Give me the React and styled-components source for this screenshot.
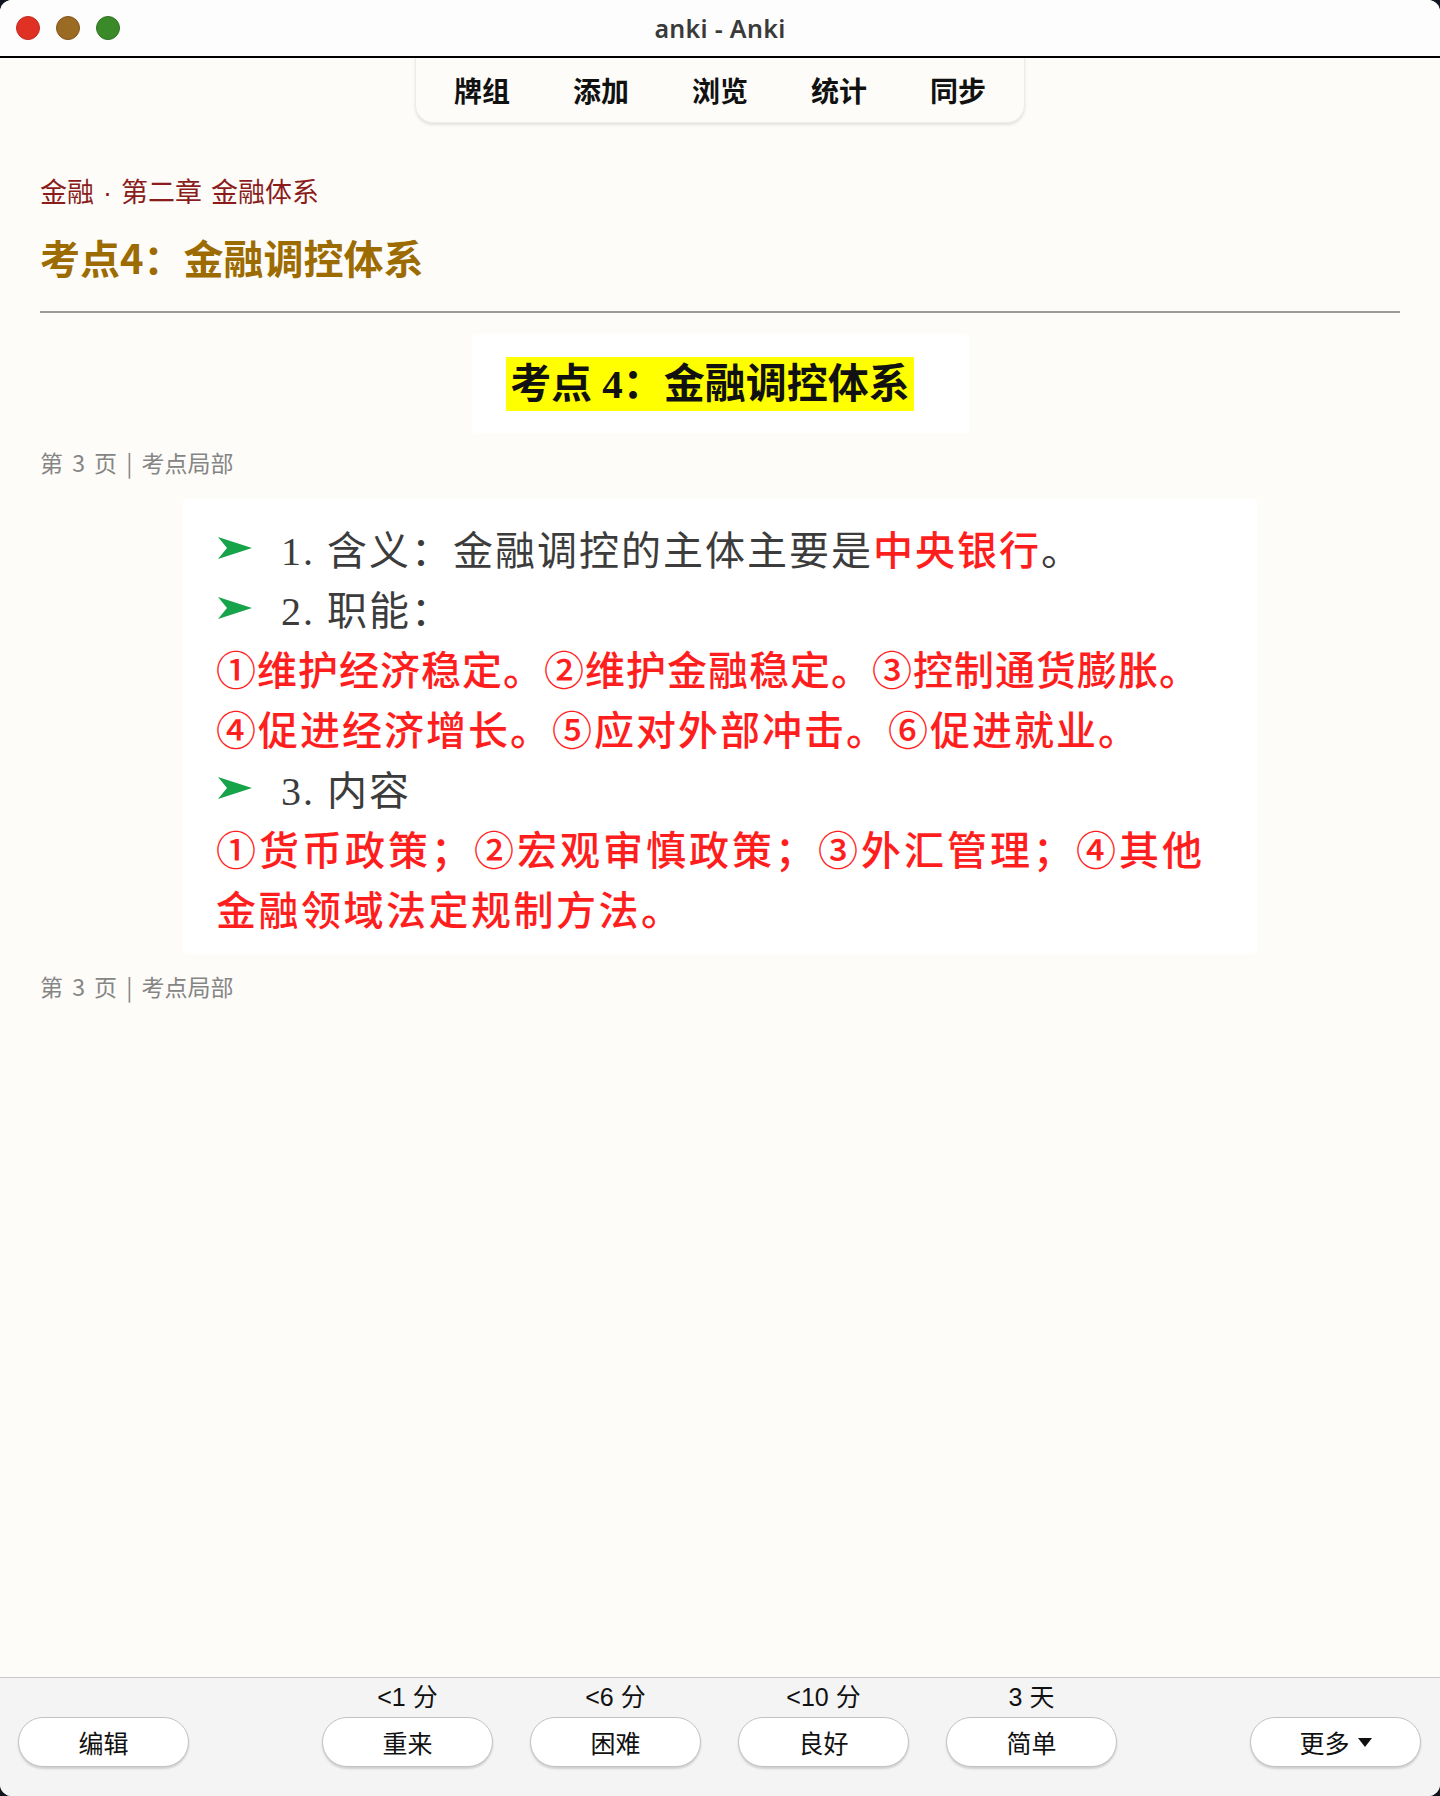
import React from "react";
import styled, { createGlobalStyle } from "styled-components";

const GlobalStyle = createGlobalStyle`
  html, body {
    margin: 0;
    padding: 0;
    background: #10151f;
  }
  body {
    font-family: "Noto Sans", "Noto Sans CJK SC", sans-serif;
  }
  * {
    box-sizing: border-box;
  }
`;

const CJK = `"Noto Sans CJK SC", "Noto Sans", sans-serif`;

const Window = styled.div`
  width: 1440px;
  height: 1796px;
  display: flex;
  flex-direction: column;
  border-radius: 12px;
  overflow: hidden;
  background: #fdfcf8;
`;

const TitleBar = styled.header`
  height: 58px;
  flex-shrink: 0;
  display: grid;
  grid-template-columns: 1fr auto 1fr;
  align-items: center;
  background: #fdfdfd;
  border-bottom: 2px solid #000;
  padding: 0 16px;
`;

const Lights = styled.div`
  display: flex;
  gap: 16px;
`;

const Light = styled.span`
  width: 24px;
  height: 24px;
  border-radius: 50%;
  background: ${(p) => p.color};
  border: 1px solid ${(p) => p.edge};
`;

const WindowTitle = styled.div`
  font-family: "Noto Sans", sans-serif;
  font-size: 25px;
  font-weight: 600;
  color: #3a3a3a;
  letter-spacing: 0.3px;
`;

const Main = styled.main`
  flex: 1;
  display: flex;
  flex-direction: column;
  padding: 0 40px;
  overflow: hidden;
`;

const NavTab = styled.nav`
  align-self: center;
  display: flex;
  align-items: center;
  gap: 63px;
  height: 65px;
  padding: 0 38px;
  background: #fdfcf8;
  border: 1px solid #ececec;
  border-top: none;
  border-radius: 0 0 18px 18px;
  box-shadow: 0 2px 3px rgba(0, 0, 0, 0.1);
`;

const NavItem = styled.a`
  font-family: ${CJK};
  font-size: 28px;
  font-weight: 700;
  color: #111;
  text-decoration: none;
  line-height: 1;
`;

const Breadcrumb = styled.div`
  margin-top: 50px;
  font-family: ${CJK};
  font-size: 27px;
  line-height: 35px;
  color: #8a1c1c;
  word-spacing: 3px;
`;

const Dot = styled.span`
  font-family: "Liberation Sans", sans-serif;
  margin: 0 9px;
`;

const Heading = styled.h1`
  margin: 22px 0 0;
  font-family: ${CJK};
  font-size: 40px;
  line-height: 48px;
  font-weight: 700;
  color: #9c6b02;
`;

const Rule = styled.hr`
  margin: 30px 0 0;
  border: none;
  border-top: 2px solid #9a9a9a;
  height: 0;
`;

const PictureBox = styled.div`
  align-self: center;
  width: ${(p) => p.w}px;
  margin-top: ${(p) => p.top}px;
  background: #fff;
  border-radius: 4px;
`;

const TitlePicture = styled(PictureBox)`
  height: 99px;
  display: flex;
  align-items: center;
  justify-content: center;
  padding-right: 20px;
`;

const Highlight = styled.span`
  background: #ffff00;
  font-family: "Liberation Serif", ${CJK};
  font-size: 41px;
  font-weight: 700;
  line-height: 54px;
  padding: 0 4px;
  color: #111;
`;

const Caption = styled.div`
  margin-top: ${(p) => p.top}px;
  font-family: ${CJK};
  font-size: 23px;
  line-height: 30px;
  word-spacing: 4px;
  color: #858585;
`;

const NotesPicture = styled(PictureBox)`
  height: 455px;
  padding: 19px 20px 0 33px;
`;

const Line = styled.div`
  display: flex;
  align-items: center;
  height: 60px;
  white-space: nowrap;
  font-family: ${(p) => (p.red ? CJK : `"Liberation Serif", ${CJK}`)};
  font-size: 40px;
  font-weight: ${(p) => (p.red ? 500 : 400)};
  letter-spacing: ${(p) => p.spacing ?? 2}px;
  color: ${(p) => (p.red ? "#ff1e1e" : "#3c3c3c")};
`;

const Arrow = styled.svg`
  width: 34px;
  height: 22px;
  margin: 0 29px 0 2px;
  flex-shrink: 0;
`;

const Red = styled.span`
  color: #ff1e1e;
  font-family: ${CJK};
  font-weight: 500;
`;

const BottomBar = styled.footer`
  flex-shrink: 0;
  height: 119px;
  display: grid;
  grid-template-columns: 1fr auto 1fr;
  align-items: end;
  padding: 0 19px 29px 18px;
  background: #f4f4f4;
  border-top: 1px solid #c8c8c8;
`;

const Answers = styled.div`
  display: flex;
  gap: 37px;
`;

const AnswerCol = styled.div`
  display: flex;
  flex-direction: column;
  align-items: center;
  gap: 6px;
`;

const Due = styled.div`
  font-family: "Liberation Sans", ${CJK};
  font-size: 25px;
  line-height: 28px;
  color: #111;
`;

const Button = styled.button`
  width: 171px;
  height: 50px;
  justify-self: ${(p) => p.side || "center"};
  display: flex;
  align-items: center;
  justify-content: center;
  gap: 8px;
  border-radius: 25px;
  border: 1px solid #c2c2c2;
  background: #fff;
  box-shadow: 0 2px 2px rgba(0, 0, 0, 0.15);
  font-family: ${CJK};
  font-size: 25px;
  color: #111;
  padding: 0;
`;

function GreenArrow() {
  return (
    <Arrow viewBox="0 0 34 22">
      <path d="M0 0 L34 11 L0 22 L9 11 Z" fill="#16a34a" />
    </Arrow>
  );
}

const answers = [
  { due: "<1 分", label: "重来" },
  { due: "<6 分", label: "困难" },
  { due: "<10 分", label: "良好" },
  { due: "3 天", label: "简单" },
];

export default function App() {
  return (
    <>
      <GlobalStyle />
      <Window>
        <TitleBar>
          <Lights>
            <Light color="#df3225" edge="#c22a1e" />
            <Light color="#9b6a23" edge="#7f561a" />
            <Light color="#3b8a2a" edge="#2f7222" />
          </Lights>
          <WindowTitle>anki - Anki</WindowTitle>
          <div />
        </TitleBar>

        <Main>
          <NavTab>
            <NavItem>牌组</NavItem>
            <NavItem>添加</NavItem>
            <NavItem>浏览</NavItem>
            <NavItem>统计</NavItem>
            <NavItem>同步</NavItem>
          </NavTab>

          <Breadcrumb>
            金融<Dot>·</Dot>第二章 金融体系
          </Breadcrumb>
          <Heading>考点4：金融调控体系</Heading>
          <Rule />

          <TitlePicture w={497} top={21}>
            <Highlight>考点 4：金融调控体系</Highlight>
          </TitlePicture>
          <Caption top={14}>第 3 页 | 考点局部</Caption>

          <NotesPicture w={1074} top={22}>
            <Line>
              <GreenArrow />
              1. 含义：金融调控的主体主要是<Red>中央银行</Red>。
            </Line>
            <Line>
              <GreenArrow />
              2. 职能：
            </Line>
            <Line red spacing={1}>
              ①维护经济稳定。②维护金融稳定。③控制通货膨胀。
            </Line>
            <Line red spacing={2}>
              ④促进经济增长。⑤应对外部冲击。⑥促进就业。
            </Line>
            <Line>
              <GreenArrow />
              3. 内容
            </Line>
            <Line red spacing={3}>
              ①货币政策；②宏观审慎政策；③外汇管理；④其他
            </Line>
            <Line red spacing={2.5}>
              金融领域法定规制方法。
            </Line>
          </NotesPicture>
          <Caption top={17}>第 3 页 | 考点局部</Caption>
        </Main>

        <BottomBar>
          <Button side="start">编辑</Button>
          <Answers>
            {answers.map((a) => (
              <AnswerCol key={a.label}>
                <Due>{a.due}</Due>
                <Button>{a.label}</Button>
              </AnswerCol>
            ))}
          </Answers>
          <Button side="end">
            更多
            <svg width="14" height="9" viewBox="0 0 14 9">
              <path d="M0 0 H14 L7 9 Z" fill="#111" />
            </svg>
          </Button>
        </BottomBar>
      </Window>
    </>
  );
}
